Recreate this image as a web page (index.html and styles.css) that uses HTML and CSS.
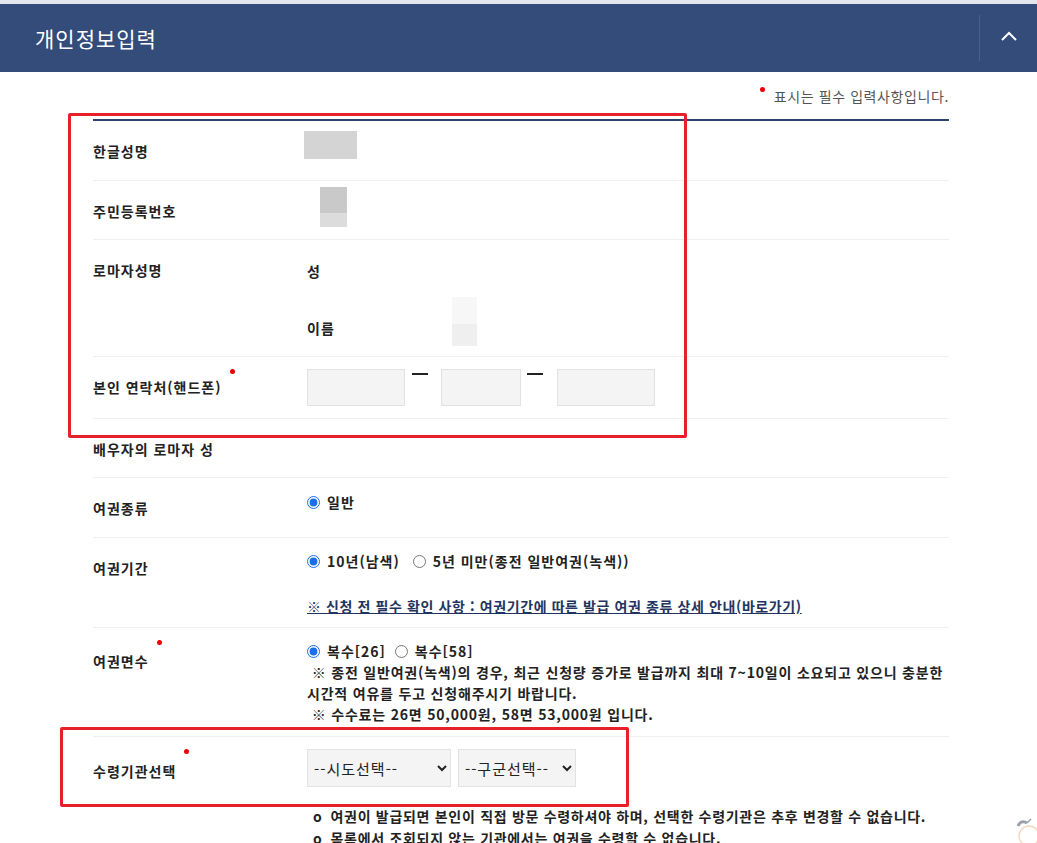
FILE: index.html
```html
<!DOCTYPE html>
<html lang="ko">
<head>
    <meta charset="UTF-8">
    <title>개인정보입력</title>
    <link rel="stylesheet" href="styles.css">
</head>
<body>
    <div class="panel-head">
        <h2>개인정보입력</h2>
        <button class="toggle" type="button">
            <svg width="18" height="12" viewBox="0 0 18 12"><polyline points="2,10 9,3 16,10" fill="none" stroke="#fff" stroke-width="2"/></svg>
        </button>
    </div>

    <div class="panel-body">
        <p class="req-note"><span class="dot"></span>표시는 필수 입력사항입니다.</p>

        <div class="form">
            <div class="row r-name">
                <div class="label">한글성명</div>
                <div class="value"><span class="mask mask-name"></span></div>
            </div>
            <div class="row r-jumin">
                <div class="label">주민등록번호</div>
                <div class="value"><span class="mask mask-jumin"></span></div>
            </div>
            <div class="row r-roman">
                <div class="label">로마자성명</div>
                <div class="value">
                    <div class="sub">성</div>
                    <div class="sub sub-given">이름 <span class="mask mask-given"></span></div>
                </div>
            </div>
            <div class="row r-phone">
                <div class="label req">본인 연락처(핸드폰)</div>
                <div class="value phone">
                    <input type="text" class="tel tel-a">
                    <span class="dash"></span>
                    <input type="text" class="tel tel-b">
                    <span class="dash"></span>
                    <input type="text" class="tel tel-a">
                </div>
            </div>
            <div class="row r-spouse">
                <div class="label">배우자의 로마자 성</div>
                <div class="value"></div>
            </div>
            <div class="row r-type">
                <div class="label">여권종류</div>
                <div class="value">
                    <label class="opt"><input type="radio" name="ptype" checked> 일반</label>
                </div>
            </div>
            <div class="row r-term">
                <div class="label">여권기간</div>
                <div class="value">
                    <label class="opt"><input type="radio" name="term" checked> 10년(남색)</label>
                    <label class="opt"><input type="radio" name="term"> 5년 미만(종전 일반여권(녹색))</label>
                    <a class="guide" href="#">※ 신청 전 필수 확인 사항 : 여권기간에 따른 발급 여권 종류 상세 안내(바로가기)</a>
                </div>
            </div>
            <div class="row r-pages">
                <div class="label req">여권면수</div>
                <div class="value">
                    <label class="opt"><input type="radio" name="pages" checked> 복수[26]</label>
                    <label class="opt"><input type="radio" name="pages"> 복수[58]</label>
                    <div class="notes">
                        <p class="note">&nbsp;※ 종전 일반여권(녹색)의 경우, 최근 신청량 증가로 발급까지 최대 7~10일이 소요되고 있으니 충분한 시간적 여유를 두고 신청해주시기 바랍니다.</p>
                        <p class="note">&nbsp;※ 수수료는 26면 50,000원, 58면 53,000원 입니다.</p>
                    </div>
                </div>
            </div>
            <div class="row r-office">
                <div class="label req">수령기관선택</div>
                <div class="value">
                    <select class="sel sel-sido"><option>--시도선택--</option></select>
                    <select class="sel sel-gugun"><option>--구군선택--</option></select>
                    <ul class="office-notes">
                        <li>여권이 발급되면 본인이 직접 방문 수령하셔야 하며, 선택한 수령기관은 추후 변경할 수 없습니다.</li>
                        <li>목록에서 조회되지 않는 기관에서는 여권을 수령할 수 없습니다.</li>
                    </ul>
                </div>
            </div>
        </div>
    </div>

    <div class="mark mark-top"></div>
    <div class="mark mark-office"></div>

    <div class="float-btn">
        <svg width="30" height="34" viewBox="0 0 30 34"><path d="M6 14 C 8 9, 12 9, 15 11" fill="none" stroke="#9aa0aa" stroke-width="3"/><path d="M15 11 L 19 7" stroke="#9aa0aa" stroke-width="1.5"/><circle cx="17" cy="24" r="10" fill="none" stroke="#f3d9c0" stroke-width="1.5"/></svg>
    </div>
</body>
</html>
```

FILE: styles.css
```css
* {
    box-sizing: border-box;
}

html, body {
    margin: 0;
    padding: 0;
    height: 100vh;
    overflow: hidden;
    background-color: #fff;
    font-family: "Noto Sans CJK KR", "Noto Sans", sans-serif;
    color: #222;
}

body {
    border-top: 4px solid #e3e6ec;
    position: relative;
}

.panel-head {
    height: 68px;
    background-color: #334c7a;
    display: flex;
    align-items: center;
    justify-content: space-between;
}

.panel-head h2 {
    margin: 0 0 0 35px;
    font-size: 21px;
    font-weight: 400;
    color: #fff;
    letter-spacing: 1px;
}

.toggle {
    width: 58px;
    height: 46px;
    background: none;
    border: none;
    border-left: 1px solid #47608c;
    display: flex;
    align-items: center;
    justify-content: center;
    padding: 0 0 4px 0;
}

.panel-body {
    padding: 0 88px 0 93px;
}

.req-note {
    margin: 0;
    padding-top: 14px;
    height: 47px;
    text-align: right;
    font-size: 14px;
    color: #555;
    letter-spacing: 0.6px;
}

.dot {
    display: inline-block;
    width: 5px;
    height: 5px;
    border-radius: 50%;
    background-color: #e00;
    vertical-align: top;
    margin: 1px 9px 0 0;
}

.form {
    border-top: 2px solid #2f4470;
}

.row {
    display: flex;
    border-bottom: 1px solid #efefef;
    font-size: 14px;
    font-weight: 700;
    letter-spacing: 1px;
}

.label {
    width: 214px;
    flex-shrink: 0;
    padding-top: 22px;
    line-height: 16px;
    position: relative;
}

.label.req::after {
    content: "";
    position: absolute;
    top: 12px;
    width: 5px;
    height: 5px;
    border-radius: 50%;
    background-color: #e00;
    margin-left: 8px;
}

.value {
    flex: 1;
    line-height: 16px;
}

.mask {
    display: inline-block;
    background-color: #d4d4d4;
}

.r-name { height: 60px; }
.r-name .value { padding-top: 10px; }
.mask-name { width: 53px; height: 28px; margin-left: -3px; }

.r-jumin { height: 59px; }
.r-jumin .value { padding-top: 6px; }
.mask-jumin {
    width: 27px;
    height: 40px;
    margin-left: 13px;
    background: linear-gradient(#c9c9c9 0 65%, #dcdcdc 65%);
}

.r-roman { height: 117px; }
.r-roman .value { padding-top: 23px; }
.sub-given {
    margin-top: 41px;
    position: relative;
}
.mask-given {
    position: absolute;
    left: 145px;
    top: -23px;
    width: 25px;
    height: 49px;
    background: linear-gradient(#f7f7f7 0 55%, #efefef 55%);
}

.r-phone { height: 62px; }
.r-phone .value { padding-top: 12px; }
.phone {
    display: flex;
    align-items: flex-start;
}
.tel {
    height: 37px;
    background-color: #f4f4f4;
    border: 1px solid #e2e2e2;
    margin: 0;
}
.tel-a { width: 98px; }
.tel-b { width: 80px; }
.dash {
    width: 16px;
    height: 2px;
    background-color: #222;
    margin: 4px 13px 0 7px;
}
.phone .dash:nth-of-type(2) { margin: 4px 14px 0 6px; }

.r-spouse { height: 59px; }

.r-type { height: 60px; }
.r-type .value { padding-top: 16px; }

.opt {
    display: inline-flex;
    align-items: center;
    margin-right: 8px;
}
.opt input {
    width: 13px;
    height: 13px;
    margin: 0 7px 0 0;
    accent-color: #1a6fe6;
}

.r-term { height: 90px; }
.r-term .value { padding-top: 15px; }

.guide {
    display: block;
    margin-top: 28px;
    color: #1f3560;
    text-decoration: underline;
    font-weight: 700;
    letter-spacing: 0.6px;
}

.r-pages { height: 109px; }
.r-pages .label { padding-top: 25px; }
.r-pages .value { padding-top: 15px; }
.r-pages .opt { margin-right: 4px; }

.notes {
    margin-top: 2px;
}
.note {
    margin: 0;
    line-height: 21px;
    font-weight: 700;
    letter-spacing: 0.8px;
}

.r-office { border-bottom: none; height: 110px; }
.r-office .label { padding-top: 26px; }
.r-office .value { padding-top: 12px; }

.sel {
    height: 38px;
    background-color: #f4f4f4;
    border: 1px solid #e2e2e2;
    font-family: inherit;
    font-size: 15px;
    letter-spacing: 1px;
    color: #222;
    padding: 0 2px;
    margin: 0 2px 0 0;
}
.sel-sido { width: 144px; }
.sel-gugun { width: 118px; }

.office-notes {
    list-style: none;
    margin: 18px 0 0;
    padding: 0 0 0 6px;
    line-height: 22px;
    letter-spacing: 0.7px;
}
.office-notes li::before {
    content: "o";
    margin-right: 8px;
}

/* annotation boxes drawn over the form */
.mark {
    position: absolute;
    border: 3px solid #e8202a;
    border-radius: 2px;
}
.mark-top {
    left: 68px;
    top: 109px;
    width: 619px;
    height: 325px;
}
.mark-office {
    left: 60px;
    top: 723px;
    width: 569px;
    height: 80px;
}

.float-btn {
    position: absolute;
    left: 1012px;
    top: 808px;
}
```
